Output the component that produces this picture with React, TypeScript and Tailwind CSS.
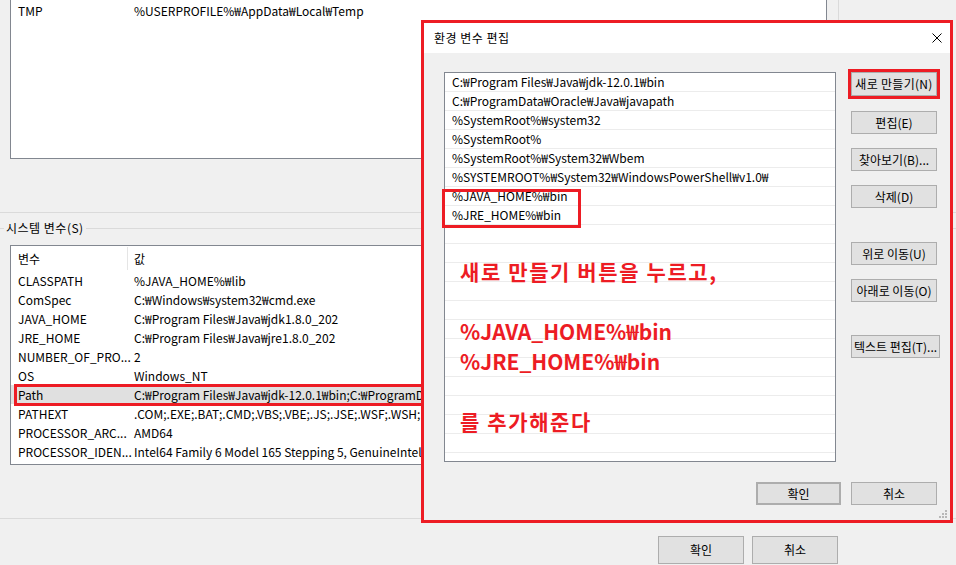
import clsx from 'clsx'

const sysVars: [string, string][] = [
  ['CLASSPATH', '%JAVA_HOME%₩lib'],
  ['ComSpec', 'C:₩Windows₩system32₩cmd.exe'],
  ['JAVA_HOME', 'C:₩Program Files₩Java₩jdk1.8.0_202'],
  ['JRE_HOME', 'C:₩Program Files₩Java₩jre1.8.0_202'],
  ['NUMBER_OF_PRO...', '2'],
  ['OS', 'Windows_NT'],
  ['Path', 'C:₩Program Files₩Java₩jdk-12.0.1₩bin;C:₩ProgramData₩Oracle₩Java₩javapath;%SystemRoot%₩system32'],
  ['PATHEXT', '.COM;.EXE;.BAT;.CMD;.VBS;.VBE;.JS;.JSE;.WSF;.WSH;.MSC'],
  ['PROCESSOR_ARC...', 'AMD64'],
  ['PROCESSOR_IDEN...', 'Intel64 Family 6 Model 165 Stepping 5, GenuineIntel'],
]

const pathItems = [
  'C:₩Program Files₩Java₩jdk-12.0.1₩bin',
  'C:₩ProgramData₩Oracle₩Java₩javapath',
  '%SystemRoot%₩system32',
  '%SystemRoot%',
  '%SystemRoot%₩System32₩Wbem',
  '%SYSTEMROOT%₩System32₩WindowsPowerShell₩v1.0₩',
  '%JAVA_HOME%₩bin',
  '%JRE_HOME%₩bin',
]

function Btn({ children, className }: { children: React.ReactNode; className?: string }) {
  return (
    <div
      className={clsx(
        'flex items-center justify-center bg-[#e1e1e1] border border-[#adadad] text-[12px] leading-none whitespace-nowrap',
        className
      )}
    >
      {children}
    </div>
  )
}

export default function App() {
  return (
    <div className="relative w-[956px] h-[565px] overflow-hidden bg-[#f0f0f0] text-[12px] text-black font-['Noto_Sans_CJK_KR','Noto_Sans',sans-serif]">
      {/* background window: 환경 변수 */}
      <div className="flex">
        <div className="ml-[10px] w-[817px] h-[159px] bg-white border-x border-b border-[#828790] pt-[1px]">
          <div className="flex h-[19px] items-center">
            <div className="w-[117px] shrink-0 pl-[7px]">TMP</div>
            <div className="pl-[6px]">%USERPROFILE%₩AppData₩Local₩Temp</div>
          </div>
        </div>
        <div className="ml-[11px] w-px h-[159px] bg-[#dadada]" />
      </div>

      <div className="mt-[53px] h-px bg-[#dadada]" />

      <div className="mt-[7px] h-[16px] flex items-center">
        <div className="w-[4px] h-px bg-[#dadada]" />
        <span className="px-[2px] leading-[16px] tracking-[0.5px]">시스템 변수(S)</span>
        <div className="flex-1 h-px bg-[#dadada]" />
      </div>

      <div className="mt-[9px] ml-[10px] w-[900px] h-[220px] bg-white border border-[#828790]">
        <div className="flex h-[25px] items-center">
          <div className="w-[116px] shrink-0 pl-[7px]">변수</div>
          <div className="w-px self-stretch my-[1px] bg-[#e5e5e5]" />
          <div className="pl-[6px]">값</div>
        </div>
        {sysVars.map(([name, value]) => (
          <div
            key={name}
            className={clsx('relative flex h-[19px] items-center whitespace-nowrap', name === 'Path' && 'bg-[#e0e0e0]')}
          >
            <div className="w-[117px] shrink-0 pl-[7px]">{name}</div>
            <div className="pl-[6px]">{value}</div>
            {name === 'Path' && (
              <div className="absolute left-[3px] right-[-20px] -top-[1px] -bottom-[2px] border-[3px] border-[#ed1c24]" />
            )}
          </div>
        ))}
      </div>

      <div className="mt-[53px] h-px bg-[#dadada]" />

      <div className="mt-[17px] flex gap-[8px] pl-[658px]">
        <Btn className="w-[86px] h-[28px]">확인</Btn>
        <Btn className="w-[86px] h-[28px]">취소</Btn>
      </div>

      {/* dialog: 환경 변수 편집 */}
      <div className="absolute left-[421px] top-[20px] w-[532px] h-[503px] border-[3px] border-[#ed1c24] bg-[#f0f0f0] flex flex-col">
        <div className="h-[30px] shrink-0 bg-white flex items-center justify-between pl-[10px] pr-[8px]">
          <span className="leading-none tracking-[0.5px]">환경 변수 편집</span>
          <svg width="10" height="10" viewBox="0 0 10 10">
            <path d="M0.5 0.5L9.5 9.5M9.5 0.5L0.5 9.5" stroke="#000" strokeWidth="1" />
          </svg>
        </div>

        <div className="relative flex-1 pt-[19px] pl-[20px] pr-[13px]">
          <div className="flex gap-[15px]">
            <div className="relative w-[392px] h-[390px] bg-white border border-[#828790]">
              <div className="w-full h-full overflow-hidden">
                {Array.from({ length: 21 }).map((_, i) => (
                  <div key={i} className="h-[19px] border-b border-[#ececec] pl-[7px] leading-[18px] whitespace-nowrap">
                    {pathItems[i] ?? ''}
                  </div>
                ))}
              </div>
              <div className="absolute -left-[3px] top-[116px] w-[139px] h-[39px] border-[3px] border-[#ed1c24]" />
              <div className="absolute left-[15px] top-[183px] flex flex-col text-[21px] font-bold text-[#ed1c24] whitespace-nowrap">
                <div className="h-[30px] leading-[30px] tracking-[1.6px]">새로 만들기 버튼을 누르고,</div>
                <div className="h-[30px]" />
                <div className="h-[30px] leading-[30px]">%JAVA_HOME%₩bin</div>
                <div className="h-[30px] leading-[30px]">%JRE_HOME%₩bin</div>
                <div className="h-[30px]" />
                <div className="h-[30px] leading-[30px] tracking-[1.6px]">를 추가해준다</div>
              </div>
            </div>

            <div className="flex flex-col w-[86px]">
              <div className="relative">
                <Btn className="w-[86px] h-[24px] tracking-[0.3px]">새로 만들기(N)</Btn>
                <div className="absolute -inset-[3px] border-[3px] border-[#ed1c24]" />
              </div>
              <Btn className="mt-[15px] w-[86px] h-[23px]">편집(E)</Btn>
              <Btn className="mt-[14px] w-[86px] h-[23px]">찾아보기(B)...</Btn>
              <Btn className="mt-[14px] w-[86px] h-[23px]">삭제(D)</Btn>
              <Btn className="mt-[34px] w-[86px] h-[23px]">위로 이동(U)</Btn>
              <Btn className="mt-[14px] w-[86px] h-[23px]">아래로 이동(O)</Btn>
              <Btn className="mt-[33px] w-[89px] h-[23px]">텍스트 편집(T)...</Btn>
            </div>
          </div>

          <div className="mt-[20px] flex justify-end gap-[10px]">
            <Btn className="w-[85px] h-[23px] border-2 border-[#0078d7]">확인</Btn>
            <Btn className="w-[86px] h-[23px]">취소</Btn>
          </div>

          <svg className="absolute right-[2px] bottom-[1px]" width="9" height="9" viewBox="0 0 9 9">
            <rect x="6" y="0" width="2" height="2" fill="#b8b8b8" />
            <rect x="3" y="3" width="2" height="2" fill="#b8b8b8" />
            <rect x="6" y="3" width="2" height="2" fill="#b8b8b8" />
            <rect x="0" y="6" width="2" height="2" fill="#b8b8b8" />
            <rect x="3" y="6" width="2" height="2" fill="#b8b8b8" />
            <rect x="6" y="6" width="2" height="2" fill="#b8b8b8" />
          </svg>
        </div>
      </div>
    </div>
  )
}
